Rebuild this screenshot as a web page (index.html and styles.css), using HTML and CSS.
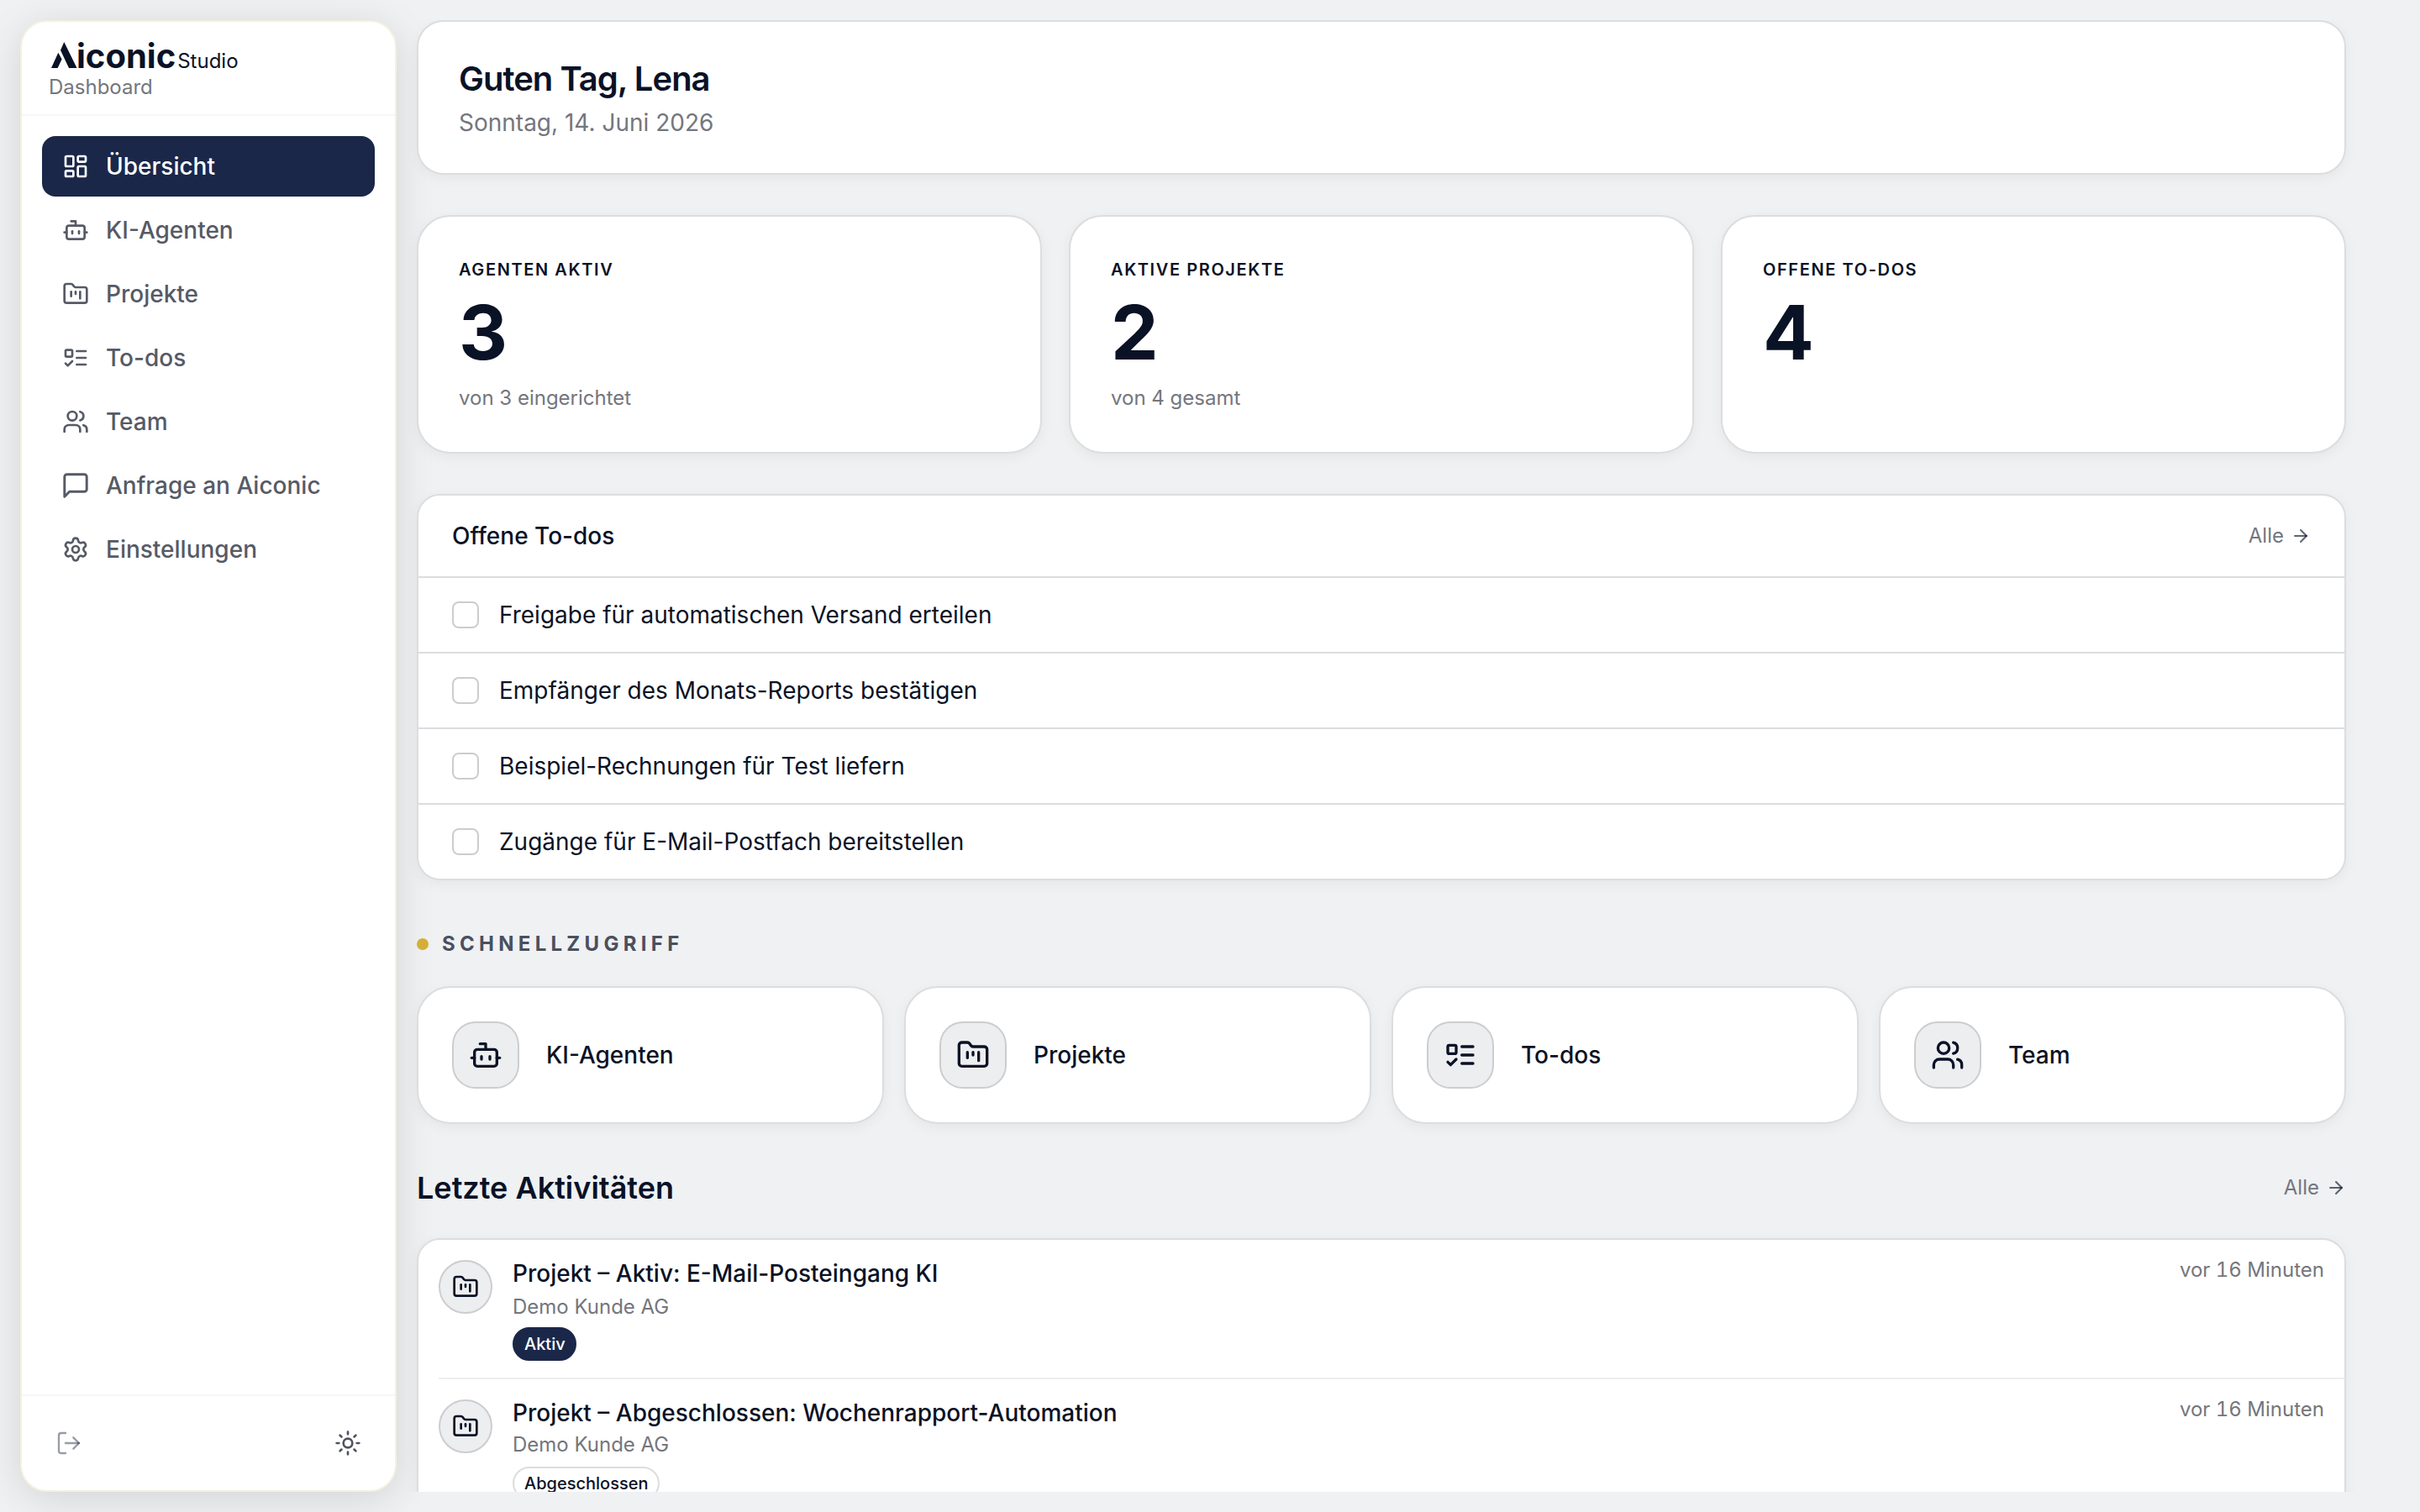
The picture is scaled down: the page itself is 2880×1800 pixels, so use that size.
FILE: index.html
```html
<!DOCTYPE html>
<html lang="de">
<head>
<meta charset="utf-8">
<title>Aiconic Studio</title>
<link rel="stylesheet" href="styles.css">
</head>
<body>
<svg class="sprite" aria-hidden="true">
  <symbol id="i-dash" viewBox="0 0 24 24"><rect x="3" y="3" width="7" height="9" rx="1"/><rect x="14" y="3" width="7" height="5" rx="1"/><rect x="14" y="12" width="7" height="9" rx="1"/><rect x="3" y="16" width="7" height="5" rx="1"/></symbol>
  <symbol id="i-bot" viewBox="0 0 24 24"><path d="M12 8V4H8"/><rect x="4" y="8" width="16" height="12" rx="2"/><path d="M2 14h2"/><path d="M20 14h2"/><path d="M15 13v2"/><path d="M9 13v2"/></symbol>
  <symbol id="i-folder" viewBox="0 0 24 24"><path d="M4 20h16a2 2 0 0 0 2-2V8a2 2 0 0 0-2-2h-7.930a2 2 0 0 1-1.660-.9l-.820-1.200A2 2 0 0 0 7.930 3H4a2 2 0 0 0-2 2v13c0 1.100.9 2 2 2Z"/><path d="M8 10v4"/><path d="M12 10v2"/><path d="M16 10v6"/></symbol>
  <symbol id="i-todo" viewBox="0 0 24 24"><rect x="3" y="5" width="6" height="6" rx="1"/><path d="m3 17 2 2 4-4"/><path d="M13 6h8"/><path d="M13 12h8"/><path d="M13 18h8"/></symbol>
  <symbol id="i-users" viewBox="0 0 24 24"><path d="M16 21v-2a4 4 0 0 0-4-4H6a4 4 0 0 0-4 4v2"/><circle cx="9" cy="7" r="4"/><path d="M22 21v-2a4 4 0 0 0-3-3.870"/><path d="M16 3.130a4 4 0 0 1 0 7.750"/></symbol>
  <symbol id="i-msg" viewBox="0 0 24 24"><path d="M21 15a2 2 0 0 1-2 2H7l-4 4V5a2 2 0 0 1 2-2h14a2 2 0 0 1 2 2z" transform="translate(-1.200 -1.200) scale(1.100)"/></symbol>
  <symbol id="i-gear" viewBox="0 0 24 24"><path d="M9.671 4.136a2.340 2.340 0 0 1 4.659 0 2.340 2.340 0 0 0 3.319 1.915 2.340 2.340 0 0 1 2.330 4.033 2.340 2.340 0 0 0 0 3.831 2.340 2.340 0 0 1-2.330 4.033 2.340 2.340 0 0 0-3.319 1.915 2.340 2.340 0 0 1-4.659 0 2.340 2.340 0 0 0-3.320-1.915 2.340 2.340 0 0 1-2.330-4.033 2.340 2.340 0 0 0 0-3.831A2.340 2.340 0 0 1 6.350 6.051a2.340 2.340 0 0 0 3.319-1.915"/><circle cx="12" cy="12" r="3"/></symbol>
  <symbol id="i-out" viewBox="0 0 24 24"><path d="m16 17 5-5-5-5"/><path d="M21 12H9"/><path d="M9 21H5a2 2 0 0 1-2-2V5a2 2 0 0 1 2-2h4"/></symbol>
  <symbol id="i-sun" viewBox="0 0 24 24"><circle cx="12" cy="12" r="4"/><path d="M12 2v2M12 20v2M4.930 4.930l1.410 1.410M17.660 17.660l1.410 1.410M2 12h2M20 12h2M6.340 17.660l-1.410 1.410M19.070 4.930l-1.410 1.410"/></symbol>
  <symbol id="i-arrow" viewBox="0 0 24 24"><path d="M5 12h14"/><path d="m12 5 7 7-7 7"/></symbol>
</svg>
<div class="app">
  <aside class="sidebar">
    <div class="brand">
      <div class="logo">
        <svg class="logo-mark" viewBox="0 0 31 31"><path d="M15.300 0 30.500 31H21L11 9.700ZM8.300 12.800 12.600 20.500 7.600 31H0Z"/></svg><span class="logo-name">iconic</span><span class="logo-sub">Studio</span>
      </div>
      <div class="brand-caption">Dashboard</div>
    </div>
    <nav class="nav">
      <a class="nav-item active"><svg class="icon"><use href="#i-dash"/></svg>Übersicht</a>
      <a class="nav-item"><svg class="icon"><use href="#i-bot"/></svg>KI-Agenten</a>
      <a class="nav-item"><svg class="icon"><use href="#i-folder"/></svg>Projekte</a>
      <a class="nav-item"><svg class="icon"><use href="#i-todo"/></svg>To-dos</a>
      <a class="nav-item"><svg class="icon"><use href="#i-users"/></svg>Team</a>
      <a class="nav-item"><svg class="icon"><use href="#i-msg"/></svg>Anfrage an Aiconic</a>
      <a class="nav-item"><svg class="icon"><use href="#i-gear"/></svg>Einstellungen</a>
    </nav>
    <div class="sidebar-foot">
      <svg class="icon thin logout"><use href="#i-out"/></svg>
      <svg class="icon theme"><use href="#i-sun"/></svg>
    </div>
  </aside>
  <main class="main">
    <header class="card greeting">
      <h1 class="greeting-title">Guten Tag, Lena</h1>
      <p class="greeting-date">Sonntag, 14. Juni 2026</p>
    </header>
    <section class="stats">
      <div class="card stat"><div class="stat-label">Agenten aktiv</div><div class="stat-value">3</div><div class="stat-note">von 3 eingerichtet</div></div>
      <div class="card stat"><div class="stat-label">Aktive Projekte</div><div class="stat-value">2</div><div class="stat-note">von 4 gesamt</div></div>
      <div class="card stat"><div class="stat-label">Offene To-dos</div><div class="stat-value">4</div></div>
    </section>
    <section class="card todos">
      <div class="todos-head"><h2 class="todos-title">Offene To-dos</h2><a class="more">Alle<svg class="icon arrow"><use href="#i-arrow"/></svg></a></div>
      <div class="todo"><span class="check"></span>Freigabe für automatischen Versand erteilen</div>
      <div class="todo"><span class="check"></span>Empfänger des Monats-Reports bestätigen</div>
      <div class="todo"><span class="check"></span>Beispiel-Rechnungen für Test liefern</div>
      <div class="todo"><span class="check"></span>Zugänge für E-Mail-Postfach bereitstellen</div>
    </section>
    <h2 class="eyebrow"><span class="dot"></span>Schnellzugriff</h2>
    <section class="quick">
      <a class="card quick-card"><span class="tile"><svg class="icon"><use href="#i-bot"/></svg></span>KI-Agenten</a>
      <a class="card quick-card"><span class="tile"><svg class="icon"><use href="#i-folder"/></svg></span>Projekte</a>
      <a class="card quick-card"><span class="tile"><svg class="icon"><use href="#i-todo"/></svg></span>To-dos</a>
      <a class="card quick-card"><span class="tile"><svg class="icon"><use href="#i-users"/></svg></span>Team</a>
    </section>
    <div class="section-head"><h2 class="section-title">Letzte Aktivitäten</h2><a class="more">Alle<svg class="icon arrow"><use href="#i-arrow"/></svg></a></div>
    <section class="card feed">
      <article class="event">
        <span class="bubble"><svg class="icon"><use href="#i-folder"/></svg></span>
        <div class="event-body"><div class="event-title">Projekt – Aktiv: E-Mail-Posteingang KI</div><div class="event-sub">Demo Kunde AG</div><span class="pill solid">Aktiv</span></div>
        <time class="event-time">vor 16 Minuten</time>
      </article>
      <article class="event">
        <span class="bubble"><svg class="icon"><use href="#i-folder"/></svg></span>
        <div class="event-body"><div class="event-title">Projekt – Abgeschlossen: Wochenrapport-Automation</div><div class="event-sub">Demo Kunde AG</div><span class="pill">Abgeschlossen</span></div>
        <time class="event-time">vor 16 Minuten</time>
      </article>
    </section>
  </main>
</div>
</body>
</html>
```
FILE: styles.css
```css
:root {
  --bg: #eff1f3;
  --ink: #0a1226;
  --navy: #1b2749;
  --muted: #74767d;
  --line: #dcdddf;
}
* { box-sizing: border-box; }
body {
  margin: 0;
  width: 2880px;
  height: 1800px;
  overflow: hidden;
  background: var(--bg);
  color: var(--ink);
  font-family: Inter, "Liberation Sans", sans-serif;
  font-size: 28px;
  line-height: 40px;
}
h1, h2, p { margin: 0; font-weight: inherit; font-size: inherit; }
.sprite { display: none; }
.icon {
  flex: none;
  width: 32px;
  height: 32px;
  fill: none;
  stroke: currentColor;
  stroke-width: 2;
  stroke-linecap: round;
  stroke-linejoin: round;
}
.app { display: flex; gap: 24px; height: 1800px; padding: 24px 88px 24px 24px; }

.sidebar {
  display: flex;
  flex-direction: column;
  flex: none;
  width: 448px;
  height: 1752px;
  background: #fff;
  border: 2px solid #f5f1df;
  border-radius: 32px;
  box-shadow: 0 8px 48px rgba(0, 0, 0, .12);
}
.brand { height: 112px; padding: 24px 32px 0; border-bottom: 2px solid #f5f6f7; }
.logo { display: flex; align-items: baseline; height: 34px; padding-left: 3px; line-height: 34px; }
.logo-mark { width: 31px; height: 31px; fill: var(--ink); }
.logo-name { font-size: 40px; font-weight: 700; margin-left: -1px; }
.logo-sub { font-size: 24px; margin-left: 2px; }
.brand-caption { font-size: 24px; line-height: 32px; color: var(--muted); margin-top: 4px; }
.nav { display: flex; flex-direction: column; gap: 4px; flex: 1; padding: 24px; }
.nav-item {
  display: flex;
  align-items: center;
  gap: 20px;
  height: 72px;
  padding: 0 24px;
  border-radius: 16px;
  font-weight: 500;
  color: #565a66;
}
.nav-item.active { background: var(--navy); color: #fff; }
.sidebar-foot {
  display: flex;
  align-items: center;
  justify-content: space-between;
  height: 114px;
  padding: 0 40px;
  border-top: 2px solid #f5f6f7;
}
.thin { stroke-width: 1.75; }
.logout { color: rgba(10, 18, 38, .42); }
.theme { color: #4f5260; }

.main { display: flex; flex-direction: column; flex: 1; height: 1752px; overflow: hidden; margin: 0 -24px; padding: 0 24px; }
.main > * { flex: none; }
.card {
  background: #fff;
  border: 2px solid var(--line);
  box-shadow: 0 4px 16px rgba(0, 0, 0, .05);
}
.greeting { height: 184px; padding: 43px 48px; border-radius: 32px; }
.greeting-title { font-size: 40px; line-height: 50px; font-weight: 600; letter-spacing: -0.025em; }
.greeting-date { margin-top: 7px; color: var(--muted); }
.stats { display: grid; grid-template-columns: repeat(3, 1fr); gap: 32px; margin-top: 48px; }
.stat { height: 284px; padding: 49px 48px; border-radius: 40px; }
.stat-label { font-size: 20px; line-height: 28px; font-weight: 600; letter-spacing: .08em; text-transform: uppercase; }
.stat-value { font-size: 90px; line-height: 88px; font-weight: 700; margin-top: 17px; }
.stat-note { font-size: 24px; line-height: 32px; color: var(--muted); margin-top: 18px; }
.todos { margin-top: 48px; border-radius: 28px; overflow: hidden; }
.todos-head { display: flex; align-items: center; justify-content: space-between; height: 96px; padding: 0 40px; }
.todos-title { font-weight: 500; }
.more { display: flex; align-items: center; gap: 8px; font-size: 24px; line-height: 32px; color: var(--muted); }
.arrow { width: 24px; height: 24px; color: rgba(10, 18, 38, .65); }
.todo { display: flex; align-items: center; gap: 24px; height: 90px; padding: 0 40px; border-top: 2px solid var(--line); }
.check { width: 32px; height: 32px; border: 2px solid #cdcdcf; border-radius: 8px; }
.eyebrow {
  display: flex;
  align-items: center;
  gap: 16px;
  height: 32px;
  margin-top: 60px;
  font-size: 24px;
  font-weight: 700;
  letter-spacing: .22em;
  text-transform: uppercase;
  color: #4a4f5e;
}
.dot { width: 14px; height: 14px; border-radius: 50%; background: #d4af37; }
.quick { display: grid; grid-template-columns: repeat(4, 1fr); gap: 24px; margin-top: 34px; }
.quick-card { display: flex; align-items: center; gap: 32px; height: 164px; padding: 0 40px; border-radius: 40px; font-weight: 500; }
.tile, .bubble {
  display: flex;
  align-items: center;
  justify-content: center;
  flex: none;
  background: #eceef0;
  border: 2px solid #cdcdcf;
}
.tile { width: 80px; height: 80px; border-radius: 28px; }
.tile .icon { width: 40px; height: 40px; }
.section-head { display: flex; align-items: center; justify-content: space-between; height: 56px; margin-top: 48px; }
.section-title { font-size: 36px; font-weight: 600; }
.feed { margin-top: 32px; padding-left: 24px; height: 400px; border-radius: 28px; }
.event { display: flex; align-items: flex-start; gap: 24px; height: 166px; padding: 24px 24px 0 0; border-bottom: 2px solid #eeeeef; }
.bubble { width: 64px; height: 64px; border-radius: 50%; }
.event-body { flex: 1; margin-top: -4px; }
.event-title { font-weight: 500; }
.event-sub { font-size: 24px; line-height: 32px; color: var(--muted); margin-top: 2px; }
.event:first-child .event-sub { margin: 4px 0 -2px; }
.event-time { font-size: 24px; line-height: 32px; color: var(--muted); margin-top: -4px; font-variant-numeric: tabular-nums; }
.pill {
  display: flex;
  align-items: center;
  width: fit-content;
  height: 40px;
  margin-top: 10px;
  padding: 0 12px;
  border: 2px solid var(--line);
  border-radius: 20px;
  font-size: 20px;
  font-weight: 500;
}
.pill.solid { background: var(--navy); border-color: var(--navy); color: #fff; padding-right: 11px; }
```
